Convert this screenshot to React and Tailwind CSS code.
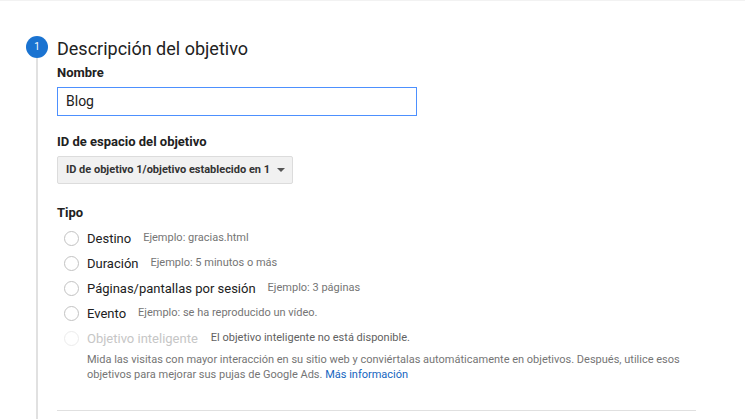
export default function App() {
  const rows = [
    { label: "Destino", ex: "Ejemplo: gracias.html" },
    { label: "Duración", ex: "Ejemplo: 5 minutos o más" },
    { label: "Páginas/pantallas por sesión", ex: "Ejemplo: 3 páginas" },
    { label: "Evento", ex: "Ejemplo: se ha reproducido un vídeo." },
  ];
  return (
    <div
      className="w-[745px] h-[419px] overflow-hidden bg-white border-t border-[#f2f2f2] text-[#212121]"
      style={{ fontFamily: "Roboto, 'Liberation Sans', sans-serif" }}
    >
      <div className="flex pl-[26px] pt-[35px] h-full">
        <div className="w-[22px] flex flex-col items-center shrink-0">
          <div className="w-[22px] h-[22px] rounded-full bg-[#1a73d1] text-white text-[10px] flex items-center justify-center leading-none">
            1
          </div>
          <div className="w-px flex-1 bg-[#c4c4c4] -translate-x-[0.5px]" />
        </div>
        <div className="ml-[9px] w-[639px] flex flex-col">
          <div className="text-[18px] leading-[22px] mt-[2px] text-[#222]">
            Descripción del objetivo
          </div>
          <div className="text-[13px] leading-4 font-bold mt-[5px] text-[#212121]">Nombre</div>
          <div className="mt-[6px] w-[360px] h-[29px] border border-[#4d90fe] flex items-center pl-[8px] text-[14px] text-[#212121]">
            Blog
          </div>
          <div className="text-[13px] leading-4 font-bold mt-[18px] text-[#212121]">
            ID de espacio del objetivo
          </div>
          <div className="mt-[6px] w-[236px] h-[28px] bg-[#f1f1f1] border border-[#dcdcdc] rounded-[2px] flex items-center pl-[8px] pr-[7px] text-[11px] font-bold text-[#333]">
            <span className="flex-1 whitespace-nowrap">ID de objetivo 1/objetivo establecido en 1</span>
            <svg width="8" height="4" viewBox="0 0 8 4" className="shrink-0">
              <path d="M0 0h8L4 4z" fill="#555" />
            </svg>
          </div>
          <div className="text-[13px] leading-4 font-bold mt-[21px] text-[#212121]">Tipo</div>
          <div className="mt-[5px] flex flex-col">
            {rows.map((r) => (
              <div key={r.label} className="h-[25px] flex items-center">
                <div className="ml-[7px] w-[15px] h-[15px] rounded-full border border-[#c2c2c2] shrink-0" />
                <span className="ml-[8px] text-[13px] text-[#212121] whitespace-nowrap">{r.label}</span>
                <span className="ml-[12px] text-[11px] text-[#757575] whitespace-nowrap">{r.ex}</span>
              </div>
            ))}
            <div className="h-[25px] flex items-center">
              <div className="ml-[7px] w-[15px] h-[15px] rounded-full border border-[#ececec] shrink-0" />
              <span className="ml-[8px] text-[13px] text-[#c6c6c6] whitespace-nowrap">Objetivo inteligente</span>
              <span className="ml-[13px] text-[11px] text-[#616161] whitespace-nowrap">
                El objetivo inteligente no está disponible.
              </span>
            </div>
            <div className="ml-[30px] mt-[1px] text-[11px] leading-[15px] text-[#757575]">
              Mida las visitas con mayor interacción en su sitio web y conviértalas automáticamente en objetivos. Después, utilice esos
              <br />
              objetivos para mejorar sus pujas de Google Ads. <span className="text-[#1565c0]">Más información</span>
            </div>
          </div>
          <div className="mt-[28px] h-px bg-[#e0e0e0] w-full" />
        </div>
      </div>
    </div>
  );
}
